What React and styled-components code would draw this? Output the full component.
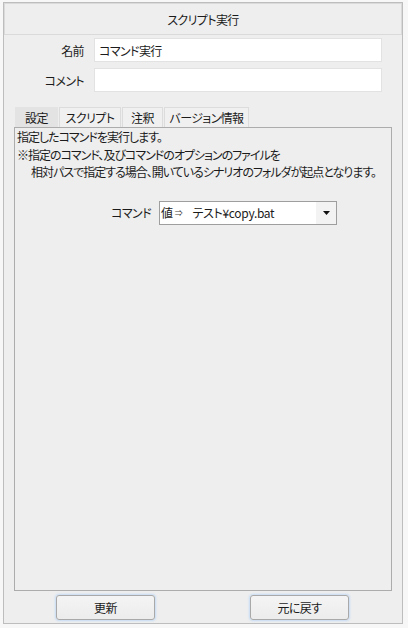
import React from "react";
import styled, { createGlobalStyle } from "styled-components";

const Global = createGlobalStyle`
  html, body { margin: 0; padding: 0; background: #f7f7f7; }
  body {
    font-family: "Noto Sans CJK JP", "Noto Sans", sans-serif;
    font-size: 12px;
    color: #1b1b1b;
    font-feature-settings: "palt";
    letter-spacing: -0.6px;
  }
`;

const Frame = styled.div`
  box-sizing: border-box;
  margin: 2px 0 0 3px;
  width: 400px;
  height: 622px;
  border: 1px solid #bdbdbd;
  background: #eeeeee;
  display: flex;
  flex-direction: column;
  padding-bottom: 3px;
`;

const Header = styled.div`
  box-sizing: border-box;
  height: 32px;
  border: 1px solid #dadada;
  display: flex;
  align-items: center;
  justify-content: center;
  font-size: 12px;
`;

const Form = styled.div`
  display: flex;
  flex-direction: column;
  gap: 6px;
  margin-top: 3px;
`;

const FieldRow = styled.div`
  display: flex;
  align-items: center;
  gap: 10px;
`;

const FieldLabel = styled.div`
  width: 80px;
  text-align: right;
`;

const TextInput = styled.div`
  box-sizing: border-box;
  width: 288px;
  height: 24px;
  background: #ffffff;
  border: 1px solid #e2e2e2;
  display: flex;
  align-items: center;
  padding-left: 4px;
`;

const TabStrip = styled.div`
  display: flex;
  align-items: flex-end;
  margin: 15px 0 0 11px;
  height: 20px;
  gap: 1px;
`;

const Tab = styled.div`
  box-sizing: border-box;
  height: 20px;
  width: ${(p) => p.$w}px;
  display: flex;
  align-items: center;
  justify-content: center;
  background: ${(p) => (p.$active ? "#e3e3e3" : "#f0f0f0")};
  border: 1px solid ${(p) => (p.$active ? "#e3e3e3" : "#dcdcdc")};
  border-bottom: none;
`;

const Panel = styled.div`
  box-sizing: border-box;
  margin: 0 10px;
  height: 464px;
  border: 1px solid #acacac;
  display: flex;
  flex-direction: column;
  padding: 0 0 0 2px;
`;

const Desc = styled.div`
  line-height: 17.5px;
  letter-spacing: -1px;
`;

const DescLine = styled.div`
  padding-left: ${(p) => (p.$indent ? 14 : 0)}px;
  white-space: nowrap;
`;

const CmdRow = styled.div`
  display: flex;
  align-items: center;
  gap: 8px;
  margin-top: 20px;
`;

const CmdLabel = styled.div`
  width: 134px;
  text-align: right;
`;

const Combo = styled.div`
  box-sizing: border-box;
  width: 178px;
  height: 24px;
  border: 1px solid #9e9e9e;
  background: #ffffff;
  display: flex;
  align-items: stretch;
  letter-spacing: -0.3px;
`;

const ComboText = styled.div`
  flex: 1;
  display: flex;
  align-items: center;
  padding-left: 1px;
  white-space: nowrap;
`;

const Arrow = styled.span`
  font-size: 8px;
  margin: 0 10px 0 2px;
  color: #444;
`;

const ComboButton = styled.div`
  width: 20px;
  background: #f3f3f3;
  display: flex;
  align-items: center;
  justify-content: center;
`;

const ButtonRow = styled.div`
  display: flex;
  gap: 95px;
  padding-left: 52px;
  margin-top: 4px;
`;

const Button = styled.div`
  box-sizing: border-box;
  width: 99px;
  height: 25px;
  border: 1px solid #a9a9a9;
  border-radius: 3px;
  background: linear-gradient(#f4f4f4, #ececec);
  box-shadow: 0 0 2px 1px #c6dcf5;
  display: flex;
  align-items: center;
  justify-content: center;
`;

export default function App() {
  return (
    <>
      <Global />
      <Frame>
        <Header>スクリプト実行</Header>
        <Form>
          <FieldRow>
            <FieldLabel>名前</FieldLabel>
            <TextInput>コマンド実行</TextInput>
          </FieldRow>
          <FieldRow>
            <FieldLabel>コメント</FieldLabel>
            <TextInput />
          </FieldRow>
        </Form>
        <TabStrip>
          <Tab $w={43} $active>設定</Tab>
          <Tab $w={62}>スクリプト</Tab>
          <Tab $w={41}>注釈</Tab>
          <Tab $w={85}>バージョン情報</Tab>
        </TabStrip>
        <Panel>
          <Desc>
            <DescLine>指定したコマンドを実行します。</DescLine>
            <DescLine>※指定のコマンド、及びコマンドのオプションのファイルを</DescLine>
            <DescLine $indent>相対パスで指定する場合、開いているシナリオのフォルダが起点となります。</DescLine>
          </Desc>
          <CmdRow>
            <CmdLabel>コマンド</CmdLabel>
            <Combo>
              <ComboText>
                値<Arrow>⇒</Arrow>テスト¥copy.bat
              </ComboText>
              <ComboButton>
                <svg width="7" height="4" viewBox="0 0 7 4">
                  <path d="M0 0H7L3.5 4Z" fill="#111" />
                </svg>
              </ComboButton>
            </Combo>
          </CmdRow>
        </Panel>
        <ButtonRow>
          <Button>更新</Button>
          <Button>元に戻す</Button>
        </ButtonRow>
      </Frame>
    </>
  );
}
